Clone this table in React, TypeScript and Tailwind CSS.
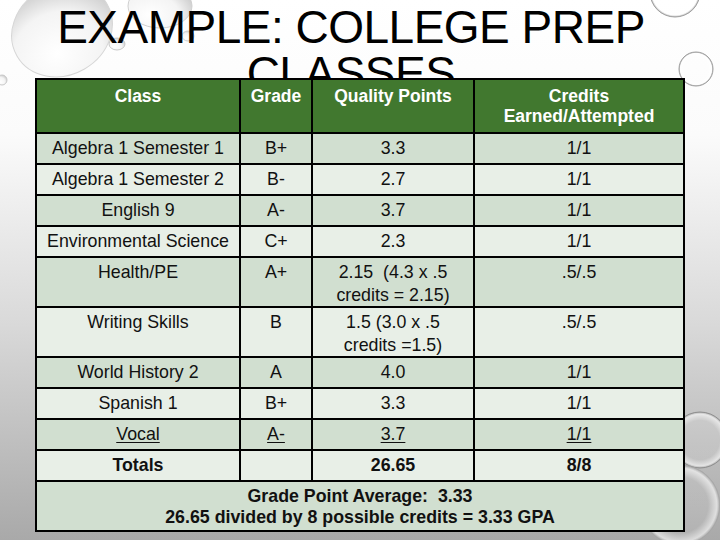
import React from "react"

type Row = {
  cls: string
  grade: string
  qp: React.ReactNode
  credits: string
  h: "single" | "double"
  dark: boolean
  underline?: boolean
  bold?: boolean
}

const rows: Row[] = [
  { cls: "Algebra 1 Semester 1", grade: "B+", qp: "3.3", credits: "1/1", h: "single", dark: true },
  { cls: "Algebra 1 Semester 2", grade: "B-", qp: "2.7", credits: "1/1", h: "single", dark: false },
  { cls: "English 9", grade: "A-", qp: "3.7", credits: "1/1", h: "single", dark: true },
  { cls: "Environmental Science", grade: "C+", qp: "2.3", credits: "1/1", h: "single", dark: false },
  {
    cls: "Health/PE",
    grade: "A+",
    qp: (
      <>
        2.15&nbsp; (4.3 x .5
        <br />
        credits = 2.15)
      </>
    ),
    credits: ".5/.5",
    h: "double",
    dark: true,
  },
  {
    cls: "Writing Skills",
    grade: "B",
    qp: (
      <>
        1.5 (3.0 x .5
        <br />
        credits =1.5)
      </>
    ),
    credits: ".5/.5",
    h: "double",
    dark: false,
  },
  { cls: "World History 2", grade: "A", qp: "4.0", credits: "1/1", h: "single", dark: true },
  { cls: "Spanish 1", grade: "B+", qp: "3.3", credits: "1/1", h: "single", dark: false },
  { cls: "Vocal", grade: "A-", qp: "3.7", credits: "1/1", h: "single", dark: true, underline: true },
  { cls: "Totals", grade: "", qp: "26.65", credits: "8/8", h: "single", dark: false, bold: true },
]

function Drops() {
  return (
    <svg className="absolute inset-0 pointer-events-none" width="720" height="540" viewBox="0 0 720 540">
      <defs>
        <radialGradient id="drop" cx="0.35" cy="0.7" r="0.75">
          <stop offset="0" stopColor="#ffffff" />
          <stop offset="0.6" stopColor="#f4f4f4" />
          <stop offset="1" stopColor="#c9c9c9" />
        </radialGradient>
        <radialGradient id="ring" cx="0.5" cy="0.5" r="0.5">
          <stop offset="0.7" stopColor="#ffffff" stopOpacity="0.1" />
          <stop offset="0.92" stopColor="#ffffff" stopOpacity="0.6" />
          <stop offset="1" stopColor="#9a9a9a" stopOpacity="0.8" />
        </radialGradient>
      </defs>
      <ellipse cx="62" cy="30" rx="52" ry="45" transform="rotate(-30 62 30)" fill="url(#drop)" stroke="#d6d6d6" />
      <ellipse cx="160" cy="6" rx="32" ry="22" fill="url(#drop)" stroke="#d0d0d0" />
      <ellipse cx="117" cy="44" rx="8" ry="6" fill="url(#drop)" stroke="#c8c8c8" />
      <ellipse cx="188" cy="36" rx="6" ry="5" fill="url(#drop)" stroke="#d0d0d0" />
      <circle cx="2" cy="80" r="5" fill="url(#drop)" stroke="#c8c8c8" />
      <circle cx="675" cy="-8" r="25" fill="url(#ring)" stroke="#9f9f9f" />
      <circle cx="696" cy="69" r="17" fill="url(#ring)" stroke="#9f9f9f" />
      <circle cx="700" cy="440" r="28" fill="url(#ring)" stroke="#8f8f8f" />
      <circle cx="680" cy="505" r="40" fill="url(#ring)" stroke="#a8a8a8" strokeOpacity="0.7" />
    </svg>
  )
}

export default function App() {
  const rowH: Record<string, string> = { single: "h-[29px]", double: "h-[48px]" }
  return (
    <div
      className="relative w-[720px] h-[540px] overflow-hidden bg-[linear-gradient(180deg,#ffffff_0%,#fbfbfb_25%,#d9d9d9_60%,#a9a9a9_100%)] text-[#111]"
      style={{ fontFamily: '"Liberation Sans", Arial, sans-serif' }}
    >
      <Drops />
      <div className="relative">
        <div className="h-[78px] overflow-hidden pr-[18px] pt-[3.5px] text-center text-[46px] leading-[46px] tracking-[-0.5px] text-black">
          EXAMPLE: COLLEGE PREP
          <br />
          CLASSES
        </div>

        <div className="ml-[35px] w-[650px] grid grid-cols-[202px_70px_160px_208px] gap-[2px] bg-black p-[2px]">
          {["Class", "Grade", "Quality Points"].map((t) => (
            <div key={t} className="h-[52px] bg-[#41782f] pt-[6px] text-center text-[17.5px] leading-[20px] font-bold text-white">
              {t}
            </div>
          ))}
          <div className="h-[52px] bg-[#41782f] pt-[6px] text-center text-[17.5px] leading-[20px] font-bold text-white">
            Credits
            <br />
            Earned/Attempted
          </div>

          {rows.map((r, i) => {
            const cell = `${rowH[r.h]} ${r.dark ? "bg-[#d1dfd0]" : "bg-[#e8efe7]"} pt-[3px] text-center text-[17.8px] leading-[23px] ${
              r.bold ? "font-bold" : ""
            }`
            const inner = r.underline ? "underline underline-offset-2" : ""
            return (
              <React.Fragment key={i}>
                <div className={cell}>
                  <span className={inner}>{r.cls}</span>
                </div>
                <div className={cell}>
                  <span className={inner}>{r.grade}</span>
                </div>
                <div className={cell}>
                  <span className={inner}>{r.qp}</span>
                </div>
                <div className={cell}>
                  <span className={inner}>{r.credits}</span>
                </div>
              </React.Fragment>
            )
          })}

          <div className="col-span-4 h-[48px] bg-[#d1dfd0] pt-[3.5px] text-center text-[17.8px] leading-[21px] font-bold">
            Grade Point Average:&nbsp; 3.33
            <br />
            26.65 divided by 8 possible credits = 3.33 GPA
          </div>
        </div>
      </div>
    </div>
  )
}
